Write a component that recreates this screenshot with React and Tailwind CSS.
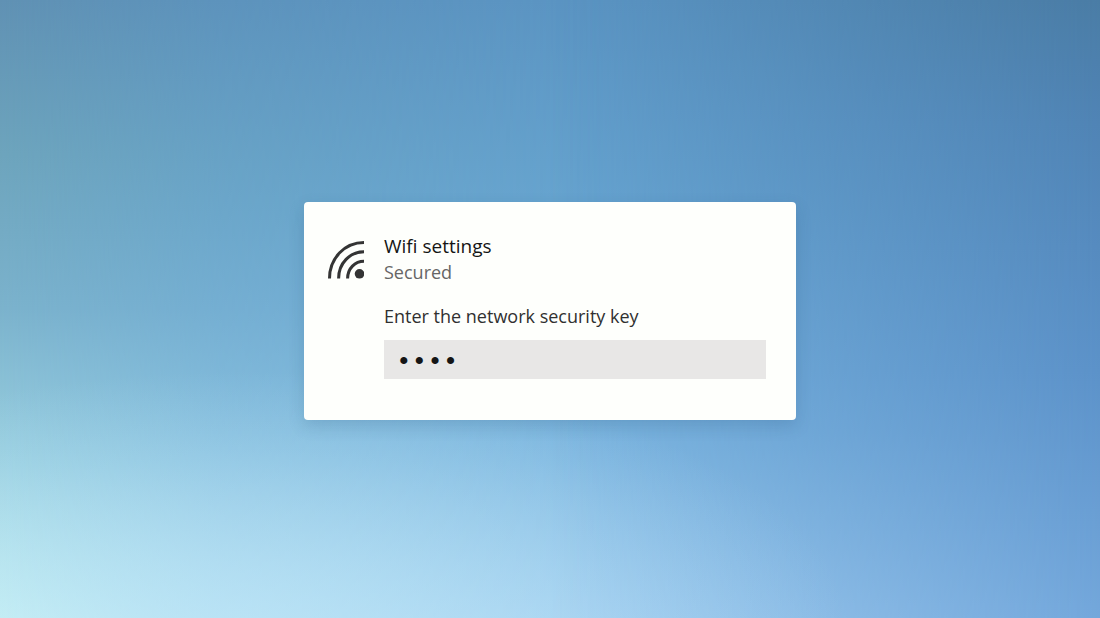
import { useState } from "react";

function WifiIcon() {
  return (
    <svg viewBox="0 0 36 38" className="h-[38px] w-9 shrink-0" fill="none" stroke="#343434" strokeWidth="3" aria-hidden="true">
      <path d="M36 1.5C17 1.5 1.5 17 1.5 37.5" />
      <path d="M36 10.8C22 10.8 10.6 22 10.6 37.5" />
      <path d="M36 20.2C27 20.2 19.6 27.5 19.6 37.5" />
      <circle cx="31.5" cy="32.8" r="4.8" fill="#343434" stroke="none" />
    </svg>
  );
}

function Backdrop() {
  return (
    <div className="absolute inset-0 -z-10 bg-[linear-gradient(180deg,#5b95c4_0%,#67a5d1_35%,#7bb5df_70%,#a2cff0_100%)]" aria-hidden="true">
      <div className="absolute inset-0 bg-[linear-gradient(180deg,#6091b3_0%,#6da4bc_25%,#7bb2cc_50%,#9ad0e0_75%,#c6f0f2_100%)] [mask-image:linear-gradient(90deg,#000_0%,rgba(0,0,0,0.45)_20%,transparent_55%)]" />
      <div className="absolute inset-0 bg-[linear-gradient(180deg,#4a7ca5_0%,#5084b5_20%,#5c92c9_60%,#73a7db_100%)] [mask-image:linear-gradient(90deg,transparent_50%,#000_100%)]" />
      <div className="absolute inset-0 bg-[radial-gradient(ellipse_55%_40%_at_22%_100%,rgba(190,230,248,0.6),transparent)]" />
    </div>
  );
}

export default function App() {
  const [key, setKey] = useState("1234");
  return (
    <main className="relative isolate flex min-h-screen items-center justify-center overflow-hidden px-4 pt-1 font-['Open_Sans','Noto_Sans',sans-serif]">
      <Backdrop />
      <form
        onSubmit={(event) => event.preventDefault()}
        className="flex w-full max-w-[492px] gap-5 rounded bg-[#fefffc] pt-[31px] pr-[30px] pb-[41px] pl-6 shadow-[0_6px_16px_rgba(30,70,110,0.18)]"
      >
        <div className="pt-2">
          <WifiIcon />
        </div>
        <div className="min-w-0 flex-1">
          <h1 className="text-[19px] leading-[26px] text-[#151515]">Wifi settings</h1>
          <p className="text-[18px] leading-[26px] text-[#666]">Secured</p>
          <label htmlFor="security-key" className="mt-[18px] block text-[18px] leading-[26px] text-[#303030]">
            Enter the network security key
          </label>
          <input
            id="security-key"
            type="password"
            autoComplete="off"
            value={key}
            onChange={(event) => setKey(event.target.value)}
            className="mt-[11px] block h-[39px] w-full rounded-none bg-[#e8e7e6] px-3 pt-1.5 font-['Liberation_Mono',monospace] text-[26px] text-[#151515] outline-none"
          />
        </div>
      </form>
    </main>
  );
}
